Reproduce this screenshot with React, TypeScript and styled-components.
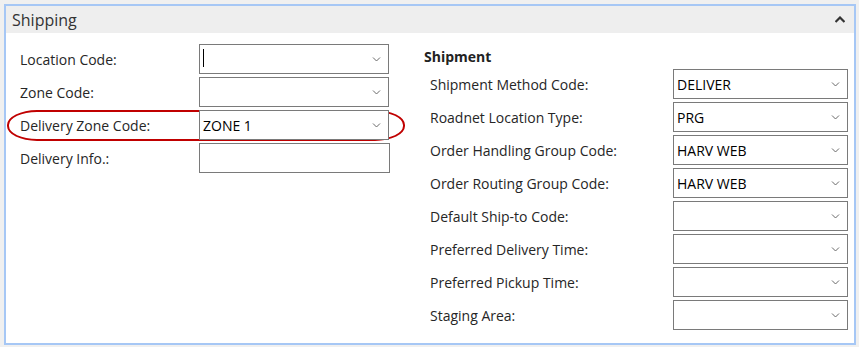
import React, { FC } from 'react';
import styled, { createGlobalStyle } from 'styled-components';

const GlobalStyle = createGlobalStyle`
    html, body {
        margin: 0;
        padding: 0;
        background: #f0f0f0;
    }
    body {
        font-family: 'Open Sans', 'Noto Sans', sans-serif;
        font-size: 14px;
        color: #222;
    }
`;

const Panel = styled.section`
    box-sizing: border-box;
    width: 852px;
    height: 341px;
    margin: 4px 0 0 4px;
    background: #fff;
    border: 2px solid #a6c7f5;
`;

const Header = styled.div`
    display: flex;
    align-items: center;
    justify-content: space-between;
    height: 27px;
    padding: 0 9px 0 6px;
    background: #eeeeee;
    font-size: 16px;
    color: #333;
`;

const Body = styled.div`
    display: flex;
    padding: 11px 0 0 14px;
`;

const Column = styled.div<{ width: number }>`
    display: flex;
    flex-direction: column;
    gap: 3px;
    width: ${({ width }) => width}px;
`;

const Heading = styled.div`
    font-weight: bold;
    line-height: 19px;
    margin: 3px 0 0;
    color: #222;
`;

const Row = styled.div<{ labelWidth: number; indent?: number }>`
    position: relative;
    display: grid;
    grid-template-columns: ${({ labelWidth }) => labelWidth}px auto;
    align-items: center;
    padding-left: ${({ indent }) => indent || 0}px;
`;

const Label = styled.span`
    color: #262626;
    white-space: nowrap;
`;

const Field = styled.div<{ width: number }>`
    box-sizing: border-box;
    position: relative;
    display: flex;
    align-items: center;
    width: ${({ width }) => width}px;
    height: 30px;
    padding: 0 7px 0 3px;
    border: 1px solid #7a7a7a;
    background: #fff;
    color: #000;
`;

const Value = styled.span`
    flex: 1;
`;

const Cursor = styled.span`
    display: inline-block;
    width: 1px;
    height: 18px;
    margin-top: 2px;
    background: #000;
`;

const Highlight = styled.div`
    box-sizing: border-box;
    position: absolute;
    left: -13px;
    top: 0;
    width: 398px;
    height: 31px;
    border: 2px solid #c00000;
    border-radius: 30px / 15px;
    pointer-events: none;
`;

const Chevron: FC = () => (
    <svg width="9" height="6" viewBox="0 0 9 6">
        <path d="M1 1.5 L4.5 5 L8 1.5" fill="none" stroke="#6a6a6a" strokeWidth="1" />
    </svg>
);

const Collapse: FC = () => (
    <svg width="10" height="7" viewBox="0 0 10 7">
        <path d="M0.5 6 L5 1.5 L9.5 6" fill="none" stroke="#333" strokeWidth="2.2" />
    </svg>
);

type SelectProps = { value?: string; width: number; cursor?: boolean; dropdown?: boolean };

const Select: FC<SelectProps> = ({ value, width, cursor, dropdown = true }) => (
    <Field width={width}>
        <Value>{cursor ? <Cursor /> : value}</Value>
        {dropdown && <Chevron />}
    </Field>
);

const shipment: [string, string][] = [
    ['Shipment Method Code:', 'DELIVER'],
    ['Roadnet Location Type:', 'PRG'],
    ['Order Handling Group Code:', 'HARV WEB'],
    ['Order Routing Group Code:', 'HARV WEB'],
    ['Default Ship-to Code:', ''],
    ['Preferred Delivery Time:', ''],
    ['Preferred Pickup Time:', ''],
    ['Staging Area:', ''],
];

export default function App() {
    return (
        <>
            <GlobalStyle />
            <Panel>
                <Header>
                    <span>Shipping</span>
                    <Collapse />
                </Header>
                <Body>
                    <Column width={404}>
                        <Row labelWidth={179}>
                            <Label>Location Code:</Label>
                            <Select width={190} cursor />
                        </Row>
                        <Row labelWidth={179}>
                            <Label>Zone Code:</Label>
                            <Select width={190} />
                        </Row>
                        <Row labelWidth={179}>
                            <Highlight />
                            <Label>Delivery Zone Code:</Label>
                            <Select width={190} value="ZONE 1" />
                        </Row>
                        <Row labelWidth={179}>
                            <Label>Delivery Info.:</Label>
                            <Select width={191} dropdown={false} />
                        </Row>
                    </Column>
                    <Column width={430}>
                        <Heading>Shipment</Heading>
                        {shipment.map(([label, value]) => (
                            <Row key={label} labelWidth={243} indent={6}>
                                <Label>{label}</Label>
                                <Select width={175} value={value} />
                            </Row>
                        ))}
                    </Column>
                </Body>
            </Panel>
        </>
    );
}
